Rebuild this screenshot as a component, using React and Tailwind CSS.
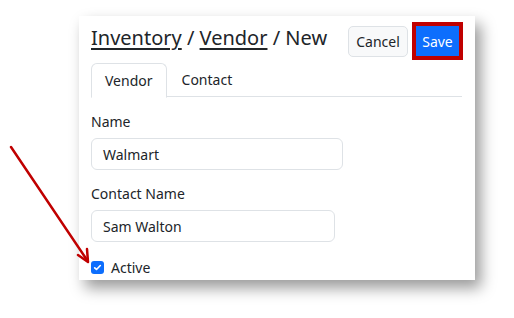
import React from 'react';

const font = { fontFamily: '"Noto Sans", "Open Sans", sans-serif' };

const Field = ({ label, value, width }) => (
  <div className="flex flex-col">
    <label className="text-[14px] leading-[20px] text-[#212529] mb-[6px]">{label}</label>
    <div className={`${width} h-[32px] border border-[#dee2e6] rounded-[6px] flex items-center px-[11px] text-[14px] text-[#212529]`}>
      {value}
    </div>
  </div>
);

export default function App() {
  return (
    <div className="relative w-[514px] h-[318px] bg-white overflow-hidden" style={font}>
      {/* CARD */}
      <div className="absolute left-[79px] top-[16px] w-[396px] h-[264px] bg-white overflow-hidden shadow-[6px_8px_14px_rgba(0,0,0,0.4)] px-[12px]">
        {/* HEADER */}
        <div className="flex items-center justify-between pt-[3px] h-[47px]">
          <h1 className="text-[20px] text-[#212529] leading-none -mt-[6px]">
            <span className="underline underline-offset-[3px] decoration-[1.5px]">Inventory</span>
            <span> / </span>
            <span className="underline underline-offset-[3px] decoration-[1.5px]">Vendor</span>
            <span> / New</span>
          </h1>
          <div className="flex items-center gap-[4px]">
            <button className="h-[31px] w-[60px] rounded-[5px] border border-[#dee2e6] bg-[#f8f9fa] text-[14px] text-[#212529]">Cancel</button>
            <div className="border-[4px] border-[#c00000] p-0">
              <button className="h-[30px] w-[43px] bg-[#0d6efd] text-white text-[14px]">Save</button>
            </div>
          </div>
        </div>

        {/* TABS */}
        <div className="flex border-b border-[#dee2e6] h-[34px] mr-[1px]">
          <div className="-mb-px h-[35px] px-[13px] flex items-center border border-[#dee2e6] border-b-white rounded-t-[6px] bg-white text-[14px] text-[#212529]">Vendor</div>
          <div className="px-[15px] flex items-center text-[14px] text-[#212529]">Contact</div>
        </div>

        {/* FORM */}
        <div className="flex flex-col pt-[15px]">
          <Field label="Name" value="Walmart" width="w-[252px]" />
          <div className="h-[14px]" />
          <Field label="Contact Name" value="Sam Walton" width="w-[244px]" />
          <div className="flex items-center gap-[7px] mt-[15px]">
            <div className="w-[13px] h-[13px] rounded-[3px] bg-[#0d6efd] flex items-center justify-center">
              <svg width="9" height="9" viewBox="0 0 16 16" fill="none" stroke="white" strokeWidth="3" strokeLinecap="round" strokeLinejoin="round">
                <path d="M3 8.5l3.2 3L13 4.5" />
              </svg>
            </div>
            <span className="text-[14px] text-[#212529]">Active</span>
          </div>
        </div>
      </div>

      {/* ARROW */}
      <svg className="absolute left-0 top-0" width="514" height="318" viewBox="0 0 514 318" fill="none">
        <line x1="11" y1="147" x2="87" y2="260" stroke="#c00000" strokeWidth="2.5" strokeLinecap="round" />
        <path d="M78 255 L88 262 L87 249" stroke="#c00000" strokeWidth="2.5" strokeLinecap="round" strokeLinejoin="round" />
      </svg>
    </div>
  );
}
